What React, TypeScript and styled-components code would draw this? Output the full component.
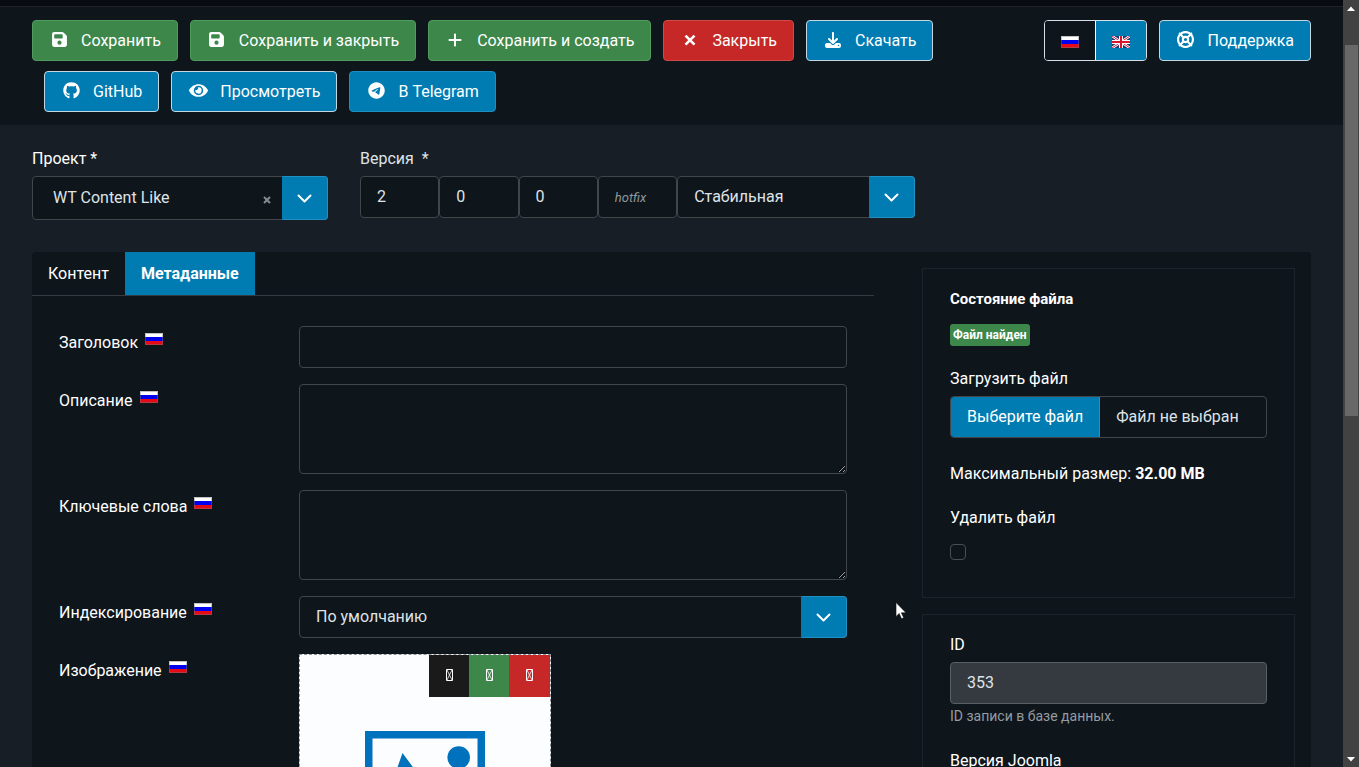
import React from 'react';
import styled, { createGlobalStyle, css } from 'styled-components';
import {
  FaDownload,
  FaFloppyDisk,
  FaGithub,
  FaLifeRing,
  FaPlus,
  FaTelegram,
} from 'react-icons/fa6';
import { FaEye } from 'react-icons/fa';

const c = {
  page: '#181e25',
  panel: '#0e151b',
  top: '#080b12',
  blue: '#007cb2',
  green: '#3e874b',
  red: '#c52827',
  line: '#42464b',
  text: '#dfe3e7',
  muted: '#959ba1',
};

const Global = createGlobalStyle`
  *, *::before, *::after { box-sizing: border-box; }
  body {
    margin: 0;
    background: ${c.page};
    color: #fff;
    font: 16px/24px Roboto, "Liberation Sans", sans-serif;
    overflow: hidden;
  }
  button, input, select, textarea { font: inherit; color: inherit; margin: 0; }
`;

const Window = styled.div`
  display: flex;
  height: 100vh;
  overflow: hidden;
`;

const Page = styled.div`
  flex: 1;
  min-width: 0;
  overflow: hidden;
`;

const TopEdge = styled.div`
  height: 6px;
  background: ${c.top};
`;

const Toolbar = styled.header`
  display: flex;
  align-items: flex-start;
  padding: 13px 32px 3px;
  border-top: 1px solid #20242a;
  background: ${c.panel};
`;

const Actions = styled.div<{ $grow?: boolean }>`
  display: flex;
  flex-wrap: wrap;
  flex: ${(p) => (p.$grow ? '1' : 'none')};
  min-width: 0;
  & > * { margin: 0 0 10px 12px; }
  & > :first-child { margin-left: 0; }
`;

const buttonLook = css<{ $bg: string; $edge: string }>`
  display: inline-flex;
  align-items: center;
  height: 41px;
  padding: 0 16px;
  border: 1px solid ${(p) => p.$edge};
  border-radius: 4px;
  background: ${(p) => p.$bg};
  color: #fff;
  white-space: nowrap;
  text-decoration: none;
  cursor: pointer;
`;

const ActionButton = styled.button`${buttonLook}`;
const ActionLink = styled.a`${buttonLook}`;

const IconBox = styled.span`
  display: inline-flex;
  justify-content: center;
  width: 20px;
  margin-right: 12px;
  padding-bottom: 2px;
`;

const LangGroup = styled.div`
  display: flex;
  border: 1px solid #d5dfe6;
  border-radius: 4px;
  overflow: hidden;
`;

const LangButton = styled.button<{ $bg: string }>`
  display: flex;
  align-items: center;
  justify-content: center;
  width: 51px;
  height: 39px;
  padding: 3px 0 0;
  border: 0;
  background: ${(p) => p.$bg};
  cursor: pointer;
  & + & { width: 50px; box-shadow: -1px 0 0 #fff; }
`;

const Form = styled.form`
  padding: 22px 32px 32px;
`;

const HeadRow = styled.div`
  display: flex;
  gap: 32px;
  margin-bottom: 32px;
`;

const Field = styled.div<{ $width: number }>`
  flex: 0 1 ${(p) => p.$width}px;
  min-width: 0;
`;

const Label = styled.label<{ $soft?: boolean }>`
  display: block;
  margin-bottom: 5px;
  color: ${(p) => (p.$soft ? c.text : '#fff')};
`;

const VersionLabel = styled(Label)`
  display: flex;
  gap: 8px;
`;

const VersionGrid = styled.div`
  display: grid;
  grid-template-columns: repeat(4, minmax(0, 1fr)) minmax(0, 3fr);
`;

const inputLook = css`
  width: 100%;
  border: 1px solid ${c.line};
  border-radius: 4px;
  background: ${c.panel};
  color: ${c.text};
  outline: 0;
`;

const Input = styled.input`
  ${inputLook}
  height: 42px;
  padding: 0 16px 2px;
  &::placeholder { color: #91979d; font-size: 13px; font-style: italic; opacity: 1; }
  &:read-only { background: #353a41; border-color: #5a5f65; }
`;

const TextArea = styled.textarea`
  ${inputLook}
  display: block;
  height: 90px;
  padding: 8px 16px;
  resize: vertical;
  color-scheme: dark;
`;

const SelectBox = styled.div`
  display: grid;
  grid-template-columns: minmax(0, 1fr) 30px 46px;
`;

const SelectInput = styled.select<{ $tall?: boolean }>`
  ${inputLook}
  grid-area: 1 / 1 / 2 / 4;
  height: ${(p) => (p.$tall ? 44 : 42)}px;
  padding: 0 ${(p) => (p.$tall ? 20 : 16)}px;
  appearance: none;
`;

const Caret = styled.span`
  grid-area: 1 / 3;
  display: flex;
  align-items: center;
  justify-content: center;
  z-index: 1;
  border: 1px solid #2290c2;
  border-left-color: ${c.blue};
  border-radius: 0 4px 4px 0;
  background: ${c.blue};
  pointer-events: none;
`;

const ClearButton = styled.button`
  grid-area: 1 / 2;
  z-index: 1;
  display: flex;
  align-items: center;
  justify-content: center;
  padding: 3px 0 0;
  border: 0;
  background: none;
  color: #868c92;
`;

const Panel = styled.main`
  display: grid;
  grid-template-columns: minmax(0, 1fr) 373px;
  gap: 48px;
  padding-right: 16px;
  border-radius: 4px;
  background: ${c.panel};
`;

const Tabs = styled.div`
  display: flex;
  height: 44px;
  border-bottom: 1px solid #353b42;
`;

const Tab = styled.button<{ $active?: boolean }>`
  padding: 0 16px;
  border: 0;
  background: ${(p) => (p.$active ? c.blue : 'none')};
  color: #fff;
  font-weight: ${(p) => (p.$active ? 700 : 400)};
`;

const Fields = styled.div`
  display: grid;
  gap: 16px;
  padding: 30px 27px;
`;

const FieldRow = styled.div`
  display: grid;
  grid-template-columns: 240px minmax(0, 1fr);
`;

const FieldLabel = styled.label`
  display: flex;
  align-items: flex-start;
  gap: 7px;
  padding-top: 5px;
  svg { margin-top: 2px; }
`;

const ImageField = styled.div`
  display: flex;
  flex-direction: column;
  align-items: center;
  width: 252px;
  height: 252px;
  border: 1px dashed #8d9297;
  background: #fcfdff;
`;

const ImageTools = styled.div`
  display: flex;
  align-self: flex-end;
  margin-bottom: 34px;
`;

const ImageTool = styled.button<{ $bg: string; $last?: boolean }>`
  display: flex;
  align-items: center;
  justify-content: center;
  width: ${(p) => (p.$last ? 41 : 40)}px;
  height: 42px;
  padding: 0 0 2px;
  border: 0;
  background: ${(p) => p.$bg};
`;

const Side = styled.aside`
  display: flex;
  flex-direction: column;
  gap: 16px;
  padding: 16px 0;
`;

const Card = styled.section`
  padding: 18px 27px 37px;
  border: 1px solid #1d232a;
`;

const CardTitle = styled.h3`
  margin: 0 0 13px;
  font-size: 15px;
  line-height: 24px;
  font-weight: 700;
`;

const Badge = styled.span`
  display: block;
  width: fit-content;
  margin-bottom: 21px;
  padding: 0 3px;
  border-radius: 3px;
  background: ${c.green};
  font-size: 12px;
  line-height: 22px;
  font-weight: 700;
`;

const FilePicker = styled.label`
  display: flex;
  height: 42px;
  border: 1px solid ${c.line};
  border-radius: 4px;
  line-height: 40px;
  color: ${c.text};
  overflow: hidden;
  cursor: pointer;
`;

const HiddenFile = styled.input`
  position: absolute;
  width: 1px;
  height: 1px;
  opacity: 0;
`;

const FileButton = styled.span`
  padding: 0 16px;
  border-right: 1px solid #2290c2;
  background: ${c.blue};
  color: #fff;
`;

const FileName = styled.span`
  padding: 0 16px;
`;

const SizeNote = styled.p`
  margin: 24px 0 20px;
`;

const CheckLabel = styled(Label)`
  margin-bottom: 14px;
`;

const Checkbox = styled.input`
  display: block;
  width: 16px;
  height: 16px;
  border: 1px solid #4a4f55;
  border-radius: 4px;
  background: ${c.panel};
  appearance: none;
  &:checked { background: ${c.blue}; }
`;

const Help = styled.small`
  display: block;
  margin: 2px 0 23px;
  color: ${c.muted};
  font-size: 14px;
  line-height: 20px;
`;

const ScrollTrack = styled.div`
  display: flex;
  flex-direction: column;
  align-items: center;
  width: 16px;
  padding: 6px 0 5px;
  background: #424242;
`;

const ScrollPart = styled.div<{ $share: number; $thumb?: boolean }>`
  flex: ${(p) => p.$share} 0 0;
  width: 13px;
  background: ${(p) => (p.$thumb ? '#686868' : 'none')};
`;

const Pointer = styled.svg`
  position: absolute;
  left: 895px;
  top: 602px;
  pointer-events: none;
`;

const RuFlag = () => (
  <svg width="18" height="12" viewBox="0 0 18 12" aria-hidden="true">
    <path fill="#fff" d="M0 0h18v4H0z" />
    <path fill="#0000f0" d="M0 4h18v4H0z" />
    <path fill="#e60a17" d="M0 8h18v4H0z" />
    <path fill="none" stroke="#777" strokeOpacity=".45" d="M.5.5h17v11H.5z" />
  </svg>
);

const GbFlag = () => (
  <svg width="18" height="12" viewBox="0 0 18 12" aria-hidden="true">
    <path fill="#26346f" d="M0 0h18v12H0z" />
    <path stroke="#fff" strokeWidth="2.6" d="M0 0l18 12M18 0L0 12" />
    <path stroke="#d8203a" strokeWidth="1" d="M0 0l18 12M18 0L0 12" />
    <path stroke="#fff" strokeWidth="4" d="M9 0v12M0 6h18" />
    <path stroke="#d8142e" strokeWidth="2" d="M9 0v12M0 6h18" />
  </svg>
);

const BoldCross = () => (
  <svg width="16" height="16" viewBox="0 0 16 16" fill="none" stroke="#fff" strokeWidth="2.6" aria-hidden="true">
    <path d="M3.500 3.700l9 9M12.500 3.700l-9 9" />
  </svg>
);

const Chevron = () => (
  <svg width="16" height="16" viewBox="0 0 16 16" fill="none" stroke="#fff" strokeWidth="2" strokeLinecap="round" strokeLinejoin="round" aria-hidden="true">
    <path d="M1.500 5.500l6 6 6-6" />
  </svg>
);

const MissingIcon = () => (
  <svg width="7" height="12" viewBox="0 0 7 12" fill="none" stroke="#fff" aria-hidden="true">
    <path d="M.5.5h6v11h-6z" />
    <path strokeWidth=".8" d="M1 1l5 10M6 1L1 11" />
  </svg>
);

const PictureIcon = () => (
  <svg width="120" height="108" viewBox="0 0 120 108" aria-hidden="true">
    <path fill="none" stroke="#0071bc" strokeWidth="7.5" d="M3.750 3.750h112.500v100.500H3.750z" />
    <circle cx="93.700" cy="26.500" r="11.300" fill="#0071bc" />
    <path fill="#0071bc" d="M37.500 22L13 92h94L84 52 70 66z" />
  </svg>
);

const ScrollArrow = ({ down }: { down?: boolean }) => (
  <svg width="8" height="5" viewBox="0 0 8 5" fill="#fff" aria-hidden="true">
    <path d={down ? 'M0 0h8L4 4.500z' : 'M0 5h8L4 .5z'} />
  </svg>
);

const palette = {
  green: { $bg: c.green, $edge: '#4f9c5d' },
  red: { $bg: c.red, $edge: '#d04a4a' },
  light: { $bg: c.blue, $edge: '#c3d6e2' },
  blue: { $bg: c.blue, $edge: '#1f8fc2' },
};

type Kind = keyof typeof palette;

const Action = ({ kind, icon, text, link }: { kind: Kind; icon: React.ReactNode; text: string; link?: boolean }) => {
  const inner = (
    <>
      <IconBox>{icon}</IconBox>
      {text}
    </>
  );
  return link ? (
    <ActionLink href="#" {...palette[kind]}>{inner}</ActionLink>
  ) : (
    <ActionButton type="button" {...palette[kind]}>{inner}</ActionButton>
  );
};

const Row = ({ id, text, children }: { id: string; text: string; children: React.ReactNode }) => (
  <FieldRow>
    <FieldLabel htmlFor={id}>
      {text}
      <RuFlag />
    </FieldLabel>
    {children}
  </FieldRow>
);

export default function App() {
  return (
    <Window>
      <Global />
      <Page>
        <TopEdge />
        <Toolbar>
          <Actions $grow>
            <Action kind="green" icon={<FaFloppyDisk size={17} />} text="Сохранить" />
            <Action kind="green" icon={<FaFloppyDisk size={17} />} text="Сохранить и закрыть" />
            <Action kind="green" icon={<FaPlus />} text="Сохранить и создать" />
            <Action kind="red" icon={<BoldCross />} text="Закрыть" />
            <Action kind="light" icon={<FaDownload />} text="Скачать" link />
            <Action kind="light" icon={<FaGithub size={17} />} text="GitHub" link />
            <Action kind="light" icon={<FaEye size={19} />} text="Просмотреть" link />
            <Action kind="blue" icon={<FaTelegram size={17} />} text="В Telegram" />
          </Actions>
          <Actions>
            <LangGroup>
              <LangButton type="button" $bg={c.panel} aria-label="Русский"><RuFlag /></LangButton>
              <LangButton type="button" $bg={c.blue} aria-label="English"><GbFlag /></LangButton>
            </LangGroup>
            <Action kind="light" icon={<FaLifeRing size={17} />} text="Поддержка" link />
          </Actions>
        </Toolbar>

        <Form>
          <HeadRow>
            <Field $width={296}>
              <Label htmlFor="project">Проект *</Label>
              <SelectBox>
                <SelectInput id="project" $tall>
                  <option>WT Content Like</option>
                </SelectInput>
                <ClearButton type="button" aria-label="Очистить">
                  <svg width="8" height="8" viewBox="0 0 8 8" stroke="currentColor" strokeWidth="2">
                    <path d="M1 1l6 6M7 1L1 7" />
                  </svg>
                </ClearButton>
                <Caret><Chevron /></Caret>
              </SelectBox>
            </Field>
            <Field $width={555}>
              <VersionLabel htmlFor="major" $soft>
                <span>Версия</span>
                <span>*</span>
              </VersionLabel>
              <VersionGrid>
                <Input id="major" defaultValue="2" />
                <Input aria-label="Minor" defaultValue="0" />
                <Input aria-label="Patch" defaultValue="0" />
                <Input aria-label="Hotfix" placeholder="hotfix" />
                <SelectBox>
                  <SelectInput aria-label="Стабильность">
                    <option>Стабильная</option>
                  </SelectInput>
                  <Caret><Chevron /></Caret>
                </SelectBox>
              </VersionGrid>
            </Field>
          </HeadRow>

          <Panel>
            <div>
              <Tabs role="tablist">
                <Tab type="button" role="tab" aria-selected={false}>Контент</Tab>
                <Tab type="button" role="tab" aria-selected $active>Метаданные</Tab>
              </Tabs>
              <Fields>
                <Row id="title" text="Заголовок"><Input id="title" /></Row>
                <Row id="description" text="Описание"><TextArea id="description" /></Row>
                <Row id="keywords" text="Ключевые слова"><TextArea id="keywords" /></Row>
                <Row id="robots" text="Индексирование">
                  <SelectBox>
                    <SelectInput id="robots">
                      <option>По умолчанию</option>
                    </SelectInput>
                    <Caret><Chevron /></Caret>
                  </SelectBox>
                </Row>
                <Row id="image" text="Изображение">
                  <ImageField>
                    <ImageTools>
                      <ImageTool id="image" type="button" $bg="#1a1a1a" aria-label="Просмотр"><MissingIcon /></ImageTool>
                      <ImageTool type="button" $bg={c.green} aria-label="Выбрать"><MissingIcon /></ImageTool>
                      <ImageTool type="button" $bg={c.red} $last aria-label="Удалить"><MissingIcon /></ImageTool>
                    </ImageTools>
                    <PictureIcon />
                  </ImageField>
                </Row>
              </Fields>
            </div>

            <Side>
              <Card>
                <CardTitle>Состояние файла</CardTitle>
                <Badge>Файл найден</Badge>
                <Label htmlFor="file">Загрузить файл</Label>
                <FilePicker>
                  <HiddenFile id="file" type="file" />
                  <FileButton>Выберите файл</FileButton>
                  <FileName>Файл не выбран</FileName>
                </FilePicker>
                <SizeNote>Максимальный размер: <strong>32.00 MB</strong></SizeNote>
                <CheckLabel htmlFor="remove">Удалить файл</CheckLabel>
                <Checkbox id="remove" type="checkbox" />
              </Card>
              <Card>
                <Label htmlFor="record">ID</Label>
                <Input id="record" defaultValue="353" readOnly />
                <Help>ID записи в базе данных.</Help>
                <Label htmlFor="joomla">Версия Joomla</Label>
                <Input id="joomla" />
              </Card>
            </Side>
          </Panel>
        </Form>
      </Page>

      <ScrollTrack aria-hidden="true">
        <ScrollArrow />
        <ScrollPart $share={34} />
        <ScrollPart $share={371} $thumb />
        <ScrollPart $share={341} />
        <ScrollArrow down />
      </ScrollTrack>

      <Pointer width="12" height="18" viewBox="0 0 12 18" aria-hidden="true">
        <path fill="#fff" stroke="#0a0d12" strokeWidth=".6" d="M1 .5v14l3.200-3 2.300 5.300 2.200-1-2.300-5h4.600z" />
      </Pointer>
    </Window>
  );
}
